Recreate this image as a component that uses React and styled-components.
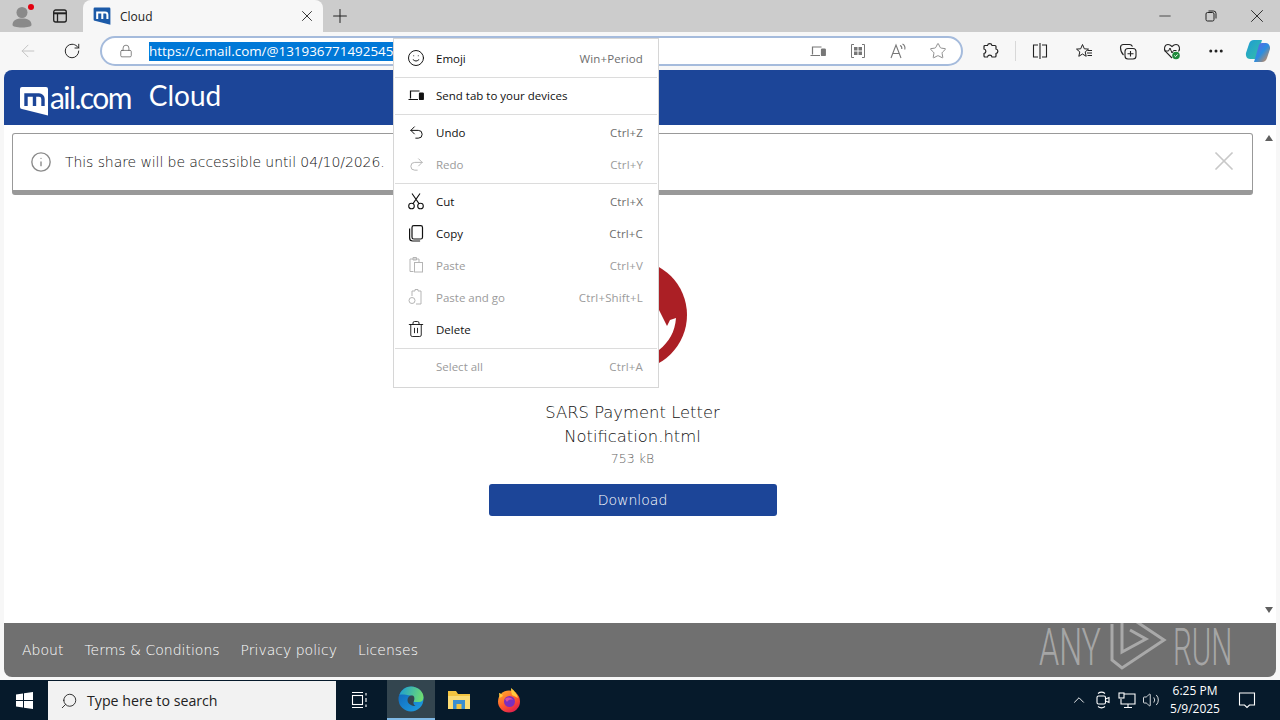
import React from "react";
import styled, { createGlobalStyle } from "styled-components";
import {
  ArrowLeft, RotateCw, Lock, Star, Plus, X, Minus, Ellipsis,
  Smile, Undo2, Redo2, Trash2, Search, ChevronUp, Volume2, Info,
} from "lucide-react";

const GlobalStyle = createGlobalStyle`
  html, body { margin: 0; height: 100%; overflow: hidden; background: #f7f7f7; }
  body { font-family: "Open Sans", "Noto Sans", sans-serif; }
  #root { height: 100%; }
`;

const Screen = styled.div`
  width: 1280px;
  height: 720px;
  display: flex;
  flex-direction: column;
  position: relative;
  overflow: hidden;
`;

/* browser chrome */
const TabStrip = styled.div`
  height: 32px;
  background: #cccccc;
  display: flex;
  align-items: center;
  flex-shrink: 0;
`;

const StripSlot = styled.div`
  width: ${(p) => p.$w || 40}px;
  height: 32px;
  display: flex;
  align-items: center;
  justify-content: center;
  position: relative;
  color: #222;
  flex-shrink: 0;
`;

const RedDot = styled.span`
  position: absolute;
  top: 4px;
  left: 28px;
  width: 6px;
  height: 6px;
  border-radius: 50%;
  background: #e3000f;
`;

const Tab = styled.div`
  width: 240px;
  height: 32px;
  margin-left: 7px;
  background: #f7f7f7;
  border-radius: 8px 8px 0 0;
  display: flex;
  align-items: center;
  padding: 0 7px 0 10px;
  box-sizing: border-box;
  flex-shrink: 0;
`;

const TabTitle = styled.span`
  font-size: 12px;
  color: #222;
  margin-left: 9px;
  flex: 1;
`;

const WindowButtons = styled.div`
  margin-left: auto;
  display: flex;
`;

const Toolbar = styled.div`
  height: 38px;
  background: #f7f7f7;
  display: flex;
  align-items: center;
  padding-left: 6px;
  flex-shrink: 0;
`;

const ToolSlot = styled.div`
  width: ${(p) => p.$w || 44}px;
  height: 32px;
  display: flex;
  align-items: center;
  justify-content: center;
  color: ${(p) => p.$color || "#222"};
  flex-shrink: 0;
`;

const AddressBar = styled.div`
  width: 863px;
  height: 30px;
  margin: 0 6px;
  box-sizing: border-box;
  background: #fff;
  border: 2px solid #a5bbdc;
  border-radius: 15px;
  display: flex;
  align-items: center;
  padding: 0 3px 0 6px;
  flex-shrink: 0;
`;

const LockSlot = styled.div`
  width: 36px;
  display: flex;
  justify-content: center;
  color: #555;
`;

const Selected = styled.span`
  margin-left: 5px;
  background: #0078d7;
  color: #fff;
  font-size: 13.4px;
  line-height: 19px;
  white-space: nowrap;
`;

const AddressIcons = styled.div`
  margin-left: auto;
  display: flex;
`;

const ToolDivider = styled.div`
  width: 1px;
  height: 20px;
  margin: 0 2px;
  background: #d8d8d8;
`;

/* web page */
const Page = styled.div`
  flex: 1;
  display: flex;
  flex-direction: column;
  padding: 0 4px 3px;
  min-height: 0;
`;

const Header = styled.header`
  height: 55px;
  background: #1c4598;
  border-radius: 8px 8px 0 0;
  display: flex;
  align-items: center;
  padding: 0 15px;
  color: #fff;
  flex-shrink: 0;
`;

const Logo = styled.div`
  display: flex;
  align-items: center;
  margin-top: 6px;
`;

const LogoText = styled.span`
  font-family: "Lato", sans-serif;
  font-weight: 400;
  font-size: 30px;
  letter-spacing: -1.6px;
  margin-left: 1px;
  margin-top: -8px;
  line-height: 1;
`;

const HeaderTitle = styled.span`
  font-family: "Lato", sans-serif;
  font-weight: 400;
  font-size: 28px;
  margin-left: 18px;
  line-height: 1;
  margin-top: -5px;
`;

const Main = styled.main`
  flex: 1;
  display: flex;
  background: #fff;
  min-height: 0;
`;

const Content = styled.div`
  flex: 1;
  padding: 8px;
  display: flex;
  flex-direction: column;
  align-items: center;
  font-family: "DejaVu Sans", sans-serif;
  font-weight: 200;
`;

const Notice = styled.div`
  align-self: stretch;
  height: 62px;
  box-sizing: border-box;
  border: 1px solid #999;
  border-bottom-width: 5px;
  border-radius: 3px;
  display: flex;
  align-items: center;
  padding: 0 18px 0 17px;
  color: #111;
`;

const NoticeText = styled.span`
  font-size: 14px;
  margin-left: 13px;
  letter-spacing: -0.08px;
`;

const NoticeClose = styled.div`
  margin-left: auto;
  color: #c8c8c8;
  display: flex;
  margin-top: -3px;
  margin-right: -6px;
`;

const FileIcon = styled.svg`
  width: 110px;
  height: 110px;
  margin: 65px 0 0 -1px;
  flex-shrink: 0;
`;

const FileName = styled.div`
  margin-top: 31px;
  font-size: 16.4px;
  line-height: 24px;
  text-align: center;
  color: #111;
  width: 220px;
`;

const FileSize = styled.div`
  font-size: 12.5px;
  line-height: 20px;
  color: #666;
`;

const DownloadButton = styled.button`
  width: 288px;
  height: 32px;
  margin-top: 15px;
  background: #1c4598;
  border: none;
  border-radius: 3px;
  color: #fff;
  font-family: inherit;
  font-weight: inherit;
  font-size: 14px;
`;

const Scrollbar = styled.div`
  width: 15px;
  display: flex;
  flex-direction: column;
  align-items: center;
  justify-content: space-between;
  padding: 10px 0 10px;
  box-sizing: border-box;
`;

const ScrollArrow = styled.span`
  width: 0;
  height: 0;
  border-left: 4px solid transparent;
  border-right: 4px solid transparent;
  ${(p) => (p.$down ? "border-top: 6px solid #606060;" : "border-bottom: 6px solid #606060;")}
`;

const Footer = styled.footer`
  height: 54px;
  background: #707070;
  border-radius: 0 0 8px 8px;
  display: flex;
  align-items: center;
  gap: 21px;
  padding: 0 18px;
  flex-shrink: 0;
`;

const FooterLink = styled.a`
  font-family: "DejaVu Sans", sans-serif;
  font-weight: 200;
  font-size: 14px;
  color: #fff;
`;

const Watermark = styled.div`
  position: absolute;
  left: 1039px;
  top: 610px;
  height: 62px;
  display: flex;
  align-items: center;
  color: rgba(255, 255, 255, 0.4);
  pointer-events: none;
`;

const WatermarkWord = styled.span`
  font-family: "Roboto", sans-serif;
  font-weight: 300;
  font-size: 52px;
  line-height: 1;
  display: inline-block;
  width: ${(p) => p.$w}px;
  margin-left: ${(p) => p.$ml || 0}px;
  transform: scaleX(${(p) => p.$scale});
  transform-origin: left center;
  margin-top: 14px;
`;

/* context menu */
const Menu = styled.div`
  position: absolute;
  left: 393px;
  top: 38px;
  width: 266px;
  box-sizing: border-box;
  background: #fff;
  border: 1px solid #d6d6d6;
  padding: 3px 0 5px;
`;

const MenuItem = styled.div`
  height: 32px;
  display: flex;
  align-items: center;
  padding: 0 15px 0 13px;
  font-size: 11.5px;
  color: ${(p) => (p.$disabled ? "#9b9b9b" : "#111")};
`;

const MenuIcon = styled.span`
  width: 18px;
  height: 18px;
  display: flex;
  align-items: center;
  justify-content: center;
  margin-right: 11px;
  color: ${(p) => (p.$disabled ? "#b5b5b5" : "#111")};
`;

const Shortcut = styled.span`
  margin-left: auto;
  letter-spacing: 0.15px;
  color: ${(p) => (p.$disabled ? "#9b9b9b" : "#6e6e6e")};
`;

const MenuDivider = styled.div`
  height: 1px;
  background: #dcdcdc;
  margin: 3px 1px 1px;
`;

/* taskbar */
const Taskbar = styled.div`
  height: 40px;
  background: #061a2b;
  display: flex;
  align-items: stretch;
  flex-shrink: 0;
`;

const StartButton = styled.div`
  width: 48px;
  display: flex;
  align-items: center;
  justify-content: center;
`;

const SearchBox = styled.div`
  width: 288px;
  box-sizing: border-box;
  background: #f2f2f2;
  display: flex;
  align-items: center;
  padding-left: 12px;
  font-size: 14.2px;
  color: #222;
  gap: 9px;
  margin-top: 1px;
`;

const TaskApps = styled.div`
  display: flex;
`;

const TaskSlot = styled.div`
  width: 48px;
  margin-left: ${(p) => p.$ml || 0}px;
  display: flex;
  align-items: center;
  justify-content: center;
  box-sizing: border-box;
  ${(p) => p.$active && "background: #33454f; border-bottom: 2px solid #7fb9e6;"}
`;

const Tray = styled.div`
  margin-left: auto;
  display: flex;
  align-items: center;
  color: #fff;
`;

const TraySlot = styled.div`
  width: 24px;
  display: flex;
  justify-content: center;
`;

const Clock = styled.div`
  width: 64px;
  text-align: center;
  font-size: 12px;
  line-height: 18px;
  color: #fff;
`;

const NotifySlot = styled.div`
  width: 40px;
  margin-right: 13px;
  display: flex;
  justify-content: center;
`;

function DevicesIcon({ size = 16 }) {
  return (
    <svg width={size} height={size} viewBox="0 0 16 16" fill="none" stroke="currentColor" strokeWidth="1.2">
      <path d="M2.5 11.5V4h9M0.5 12.5h9.5" />
      <rect x="11.5" y="6" width="3.8" height="6.5" rx="0.6" fill="currentColor" />
    </svg>
  );
}

function CutIcon() {
  return (
    <svg width="18" height="18" viewBox="0 0 18 18" fill="none" stroke="currentColor" strokeWidth="1.1">
      <circle cx="4.5" cy="14" r="2.8" />
      <circle cx="13.5" cy="14" r="2.8" />
      <path d="M6 11.6 13 1.5M12 11.6 5 1.5" />
    </svg>
  );
}

function CopyIcon() {
  return (
    <svg width="18" height="18" viewBox="0 0 18 18" fill="none" stroke="currentColor" strokeWidth="1.2">
      <rect x="5" y="1.6" width="10.5" height="13.4" rx="1.8" />
      <path d="M2.6 4.5V14a3 3 0 0 0 3 3h7.5" />
    </svg>
  );
}

function PasteIcon() {
  return (
    <svg width="18" height="18" viewBox="0 0 18 18" fill="none" stroke="currentColor" strokeWidth="1">
      <path d="M6.5 15.5H3V3h9v3M6 1.5h3.5V4H6z" />
      <rect x="7.5" y="6.5" width="8" height="9.5" />
    </svg>
  );
}

function PasteGoIcon() {
  return (
    <svg width="18" height="18" viewBox="0 0 18 18" fill="none" stroke="currentColor" strokeWidth="1">
      <path d="M5 8V3h3V1.5h3V3h3v13H9" />
      <circle cx="5" cy="12.5" r="3" />
    </svg>
  );
}

const menuGroups = [
  [{ label: "Emoji", keys: "Win+Period", icon: <Smile size={18} strokeWidth={1.3} /> }],
  [{ label: "Send tab to your devices", icon: <DevicesIcon size={16} /> }],
  [
    { label: "Undo", keys: "Ctrl+Z", icon: <Undo2 size={17} strokeWidth={1.4} /> },
    { label: "Redo", keys: "Ctrl+Y", disabled: true, icon: <Redo2 size={17} strokeWidth={1.4} /> },
  ],
  [
    { label: "Cut", keys: "Ctrl+X", icon: <CutIcon /> },
    { label: "Copy", keys: "Ctrl+C", icon: <CopyIcon /> },
    { label: "Paste", keys: "Ctrl+V", disabled: true, icon: <PasteIcon /> },
    { label: "Paste and go", keys: "Ctrl+Shift+L", disabled: true, icon: <PasteGoIcon /> },
    { label: "Delete", icon: <Trash2 size={20} strokeWidth={1.2} /> },
  ],
  [{ label: "Select all", keys: "Ctrl+A", disabled: true }],
];

function MailMark({ size, bg, fg }) {
  return (
    <svg width={size} height={size} viewBox="0 0 30 30">
      <path d="M3 1h24a2 2 0 0 1 2 2v26.5L3 23a2 2 0 0 1-2-2V3a2 2 0 0 1 2-2z" fill={bg} />
      <path d="M7 20V9h13a4 4 0 0 1 4 4v7M15.5 9v11" fill="none" stroke={fg} strokeWidth="3.4" />
    </svg>
  );
}

function TabsIcon() {
  return (
    <svg width="16" height="16" viewBox="0 0 16 16" fill="none" stroke="currentColor" strokeWidth="1.3">
      <rect x="1.7" y="2" width="12.6" height="12" rx="2" />
      <path d="M1.7 5.3h12.6" strokeWidth="2" />
      <path d="M5.5 5v9" />
    </svg>
  );
}

function ProfileIcon() {
  return (
    <svg width="24" height="24" viewBox="0 0 24 24" fill="#8a8a8a">
      <circle cx="12" cy="8.5" r="5.5" />
      <path d="M2.5 21c0-5 4-6.5 9.5-6.5s9.5 1.5 9.5 6.5c0 1.5-4 2.5-9.5 2.5S2.5 22.5 2.5 21z" />
    </svg>
  );
}

function RestoreIcon() {
  return (
    <svg width="12" height="12" viewBox="0 0 12 12" fill="none" stroke="currentColor">
      <rect x="1" y="2.5" width="8" height="8.5" rx="1.5" />
      <path d="M3.5 1h5a2.500 2.500 0 0 1 2.5 2.5v5" />
    </svg>
  );
}

function AppsIcon() {
  return (
    <svg width="16" height="16" viewBox="0 0 16 16" fill="#777" stroke="#777">
      <path d="M4 1.5H1.5V14.5H4M12 1.5h2.5v13H12" fill="none" />
      <rect x="4" y="4" width="3.5" height="3.5" strokeWidth="0" />
      <rect x="8.5" y="4" width="3.5" height="3.5" strokeWidth="0" />
      <rect x="4" y="8.5" width="3.5" height="3.5" strokeWidth="0" />
      <rect x="8.5" y="8.5" width="3.5" height="3.5" strokeWidth="0" />
    </svg>
  );
}

function ReadAloudIcon() {
  return (
    <svg width="18" height="18" viewBox="0 0 18 18" fill="none" stroke="#777" strokeWidth="1.1">
      <path d="M2 16 7 3l5 13M3.8 11.5h6.4" />
      <path d="M11 3.5c1.5.5 2 2 1.8 3.5M13.5 2c2 1 2.8 3 2.3 5.5" />
    </svg>
  );
}

function ExtensionsIcon() {
  return (
    <svg width="18" height="18" viewBox="0 0 18 18" fill="none" stroke="#222" strokeWidth="1.2">
      <path d="M5.5 3.5C6 1 9.5 1 10 3.5h3a1 1 0 0 1 1 1V7c2.5.5 2.5 4 0 4.5V14a1 1 0 0 1-1 1h-3C9.500 12.500 6 12.500 5.500 15H3a1 1 0 0 1-1-1v-2.500C4.500 11 4.500 7.500 2 7V4.500a1 1 0 0 1 1-1z" />
    </svg>
  );
}

function SplitIcon() {
  return (
    <svg width="18" height="18" viewBox="0 0 18 18" fill="none" stroke="#222" strokeWidth="1.1">
      <path d="M9 1v16M7 3H2.5v12H7M11 3h4.5v12H11" />
    </svg>
  );
}

function FavoritesIcon() {
  return (
    <svg width="18" height="18" viewBox="0 0 18 18" fill="none" stroke="#222" strokeWidth="1">
      <path d="M7.5 2.5 9.300 6.800l4.200.3-3.300 2.800 1 4.400-3.700-2.300-3.700 2.300 1-4.400L1.500 7.100l4.200-.3z" />
      <path d="M12.5 8.5h4.500M12 11h5M12.500 13.500h4.500" />
    </svg>
  );
}

function CollectionsIcon() {
  return (
    <svg width="18" height="18" viewBox="0 0 18 18" fill="none" stroke="#222" strokeWidth="1.1">
      <path d="M4.5 13C2.5 11 1.5 8 1.5 5.5c0-2 1.5-3 3-3h6c1.5 0 2.5 1 3 2" />
      <rect x="6" y="6.5" width="11" height="10.5" rx="3" />
      <path d="M11.5 9v5.5M8.5 11.7h6" />
    </svg>
  );
}

function HealthIcon() {
  return (
    <svg width="18" height="18" viewBox="0 0 18 18" fill="none">
      <path d="M9 16 2.5 9.5C.5 7 1.5 2.5 5 2.5c2 0 3 1 4 2 1-1 2-2 4-2 3.5 0 4.5 4.5 2.5 7" stroke="#222" strokeWidth="1.1" />
      <path d="M1.5 9h4l1.5-3 2 5 1.500-2.500h3" stroke="#222" strokeWidth="1" />
      <circle cx="13" cy="13.5" r="3.8" fill="#1f8a3c" />
      <path d="m11.3 13.5 1.200 1.200 2.200-2.300" stroke="#fff" strokeWidth="1" />
    </svg>
  );
}

function CopilotIcon() {
  return (
    <svg width="26" height="24" viewBox="0 0 26 24">
      <defs>
        <linearGradient id="copA" x1="0" y1="0" x2="1" y2="1">
          <stop offset="0" stopColor="#1e9ad6" />
          <stop offset="1" stopColor="#35c1a5" />
        </linearGradient>
        <linearGradient id="copB" x1="0" y1="0" x2="1" y2="1">
          <stop offset="0" stopColor="#6b5be6" />
          <stop offset="0.5" stopColor="#2a8de0" />
          <stop offset="1" stopColor="#f28a3c" />
        </linearGradient>
      </defs>
      <path d="M9 1h8l-5 17c-.5 1.5-1.5 2-3 2H5C2 20 .5 17 1 14L4 5c.8-2.500 2.500-4 5-4z" fill="url(#copA)" />
      <path d="M17 4h4c2.500 0 4.500 3 4 6l-3 9c-.8 2.500-2.500 4-5 4H9l5-17c.4-1.300 1.500-2 3-2z" fill="url(#copB)" />
    </svg>
  );
}

function WindowsIcon() {
  return (
    <svg width="17" height="17" viewBox="0 0 17 17" fill="#fff">
      <path d="M0 2.4 7 1.4V8H0zM8 1.3 17 0v8H8zM0 9h7v6.600l-7-1zM8 9h9v8l-9-1.300z" />
    </svg>
  );
}

function TaskViewIcon() {
  return (
    <svg width="18" height="18" viewBox="0 0 18 18" fill="none" stroke="#fff" strokeWidth="1.1">
      <rect x="1.5" y="4.5" width="10" height="9" />
      <path d="M1 1.5h11M1 16.5h11M15 2v2.500M15 7v4M15 13.500V16" />
    </svg>
  );
}

function EdgeIcon() {
  return (
    <svg width="26" height="26" viewBox="0 0 26 26">
      <defs>
        <linearGradient id="edgeA" x1="0" y1="0.3" x2="1" y2="0.5">
          <stop offset="0" stopColor="#1f9fd0" />
          <stop offset="1" stopColor="#6fdc70" />
        </linearGradient>
        <linearGradient id="edgeB" x1="0" y1="0" x2="0.8" y2="1">
          <stop offset="0" stopColor="#0f5fb5" />
          <stop offset="1" stopColor="#1d9be0" />
        </linearGradient>
      </defs>
      <circle cx="13" cy="13" r="12.5" fill="url(#edgeB)" />
      <path d="M1.5 9C3.500 3.500 8 .5 13 .5c7 0 12.500 5 12.500 11 0 3-2 4.500-4.500 4.500h-5.500c1.500-3 .5-6-3-6.500C8 9 4 8 1.500 9z" fill="url(#edgeA)" />
      <path d="M9.5 14c0-3 2.500-5 5-4.500 2 .5 2.500 3.500 1 6.500-.5 1.500.5 3 2 4-3.500 0-8-2-8-6z" fill="#33454f" />
    </svg>
  );
}

function FolderIcon() {
  return (
    <svg width="24" height="22" viewBox="0 0 24 22">
      <path d="M1 2h8l2 3h12v15H1z" fill="#f3c440" />
      <path d="M1 7h22v13H1z" fill="#fbdc75" />
      <rect x="6" y="11" width="12" height="9" fill="#3a8ed0" />
      <rect x="9.5" y="15" width="5" height="5" fill="#f3c440" />
    </svg>
  );
}

function FirefoxIcon() {
  return (
    <svg width="24" height="26" viewBox="0 0 24 26">
      <defs>
        <linearGradient id="foxA" x1="0" y1="0" x2="0.6" y2="1">
          <stop offset="0" stopColor="#ffb52e" />
          <stop offset="0.6" stopColor="#ff5a2c" />
          <stop offset="1" stopColor="#e3224d" />
        </linearGradient>
      </defs>
      <circle cx="12" cy="14.5" r="11" fill="url(#foxA)" />
      <path d="M14 1c4 3 6 6 7 10l-6-3c-.5-2-1-4-1-7zM2 6c1 0 3 1 4 3L2.5 11z" fill="#ffc93c" />
      <circle cx="12.5" cy="14.5" r="5.5" fill="#7b2fbe" />
      <path d="M8 12c3-2.500 7-1.500 8 1-2-.8-5-.5-6 2z" fill="#d94fa0" />
    </svg>
  );
}

function MeetIcon() {
  return (
    <svg width="18" height="18" viewBox="0 0 18 18" fill="none" stroke="#fff" strokeWidth="1.1">
      <path d="M4 2.5C6 1 9 1 11 2.5M4 15.5c2 1.5 5 1.5 7 0" />
      <rect x="3" y="5" width="8.5" height="8" rx="1.5" />
      <path d="m11.5 8 3.500-1.500v5L11.500 10z" />
    </svg>
  );
}

function NetworkIcon() {
  return (
    <svg width="18" height="18" viewBox="0 0 18 18" fill="none" stroke="#fff" strokeWidth="1.1">
      <path d="M5 3h12v10H3V8M10 13v3M6 16.5h8" />
      <rect x="1" y="2" width="5" height="5" fill="#061a2b" />
    </svg>
  );
}

function NotifyIcon() {
  return (
    <svg width="18" height="18" viewBox="0 0 18 18" fill="none" stroke="#fff" strokeWidth="1.1">
      <path d="M1.5 2h15v12h-5L9 16.5 6.5 14h-5z" />
    </svg>
  );
}

function AnyRunIcon() {
  return (
    <svg width="62" height="62" viewBox="0 0 62 62" fill="none" stroke="currentColor" strokeWidth="3">
      <path d="M4 14v36l10 8 42-28L14 2v40l24-13-16-9" />
    </svg>
  );
}

const App = () => (
  <Screen>
    <GlobalStyle />
    <TabStrip>
      <StripSlot $w={44}><ProfileIcon /><RedDot /></StripSlot>
      <StripSlot $w={32}><TabsIcon /></StripSlot>
      <Tab>
        <MailMark size={18} bg="#1c5aa8" fg="#fff" />
        <TabTitle>Cloud</TabTitle>
        <X size={18} strokeWidth={1.2} color="#222" />
      </Tab>
      <StripSlot $w={34}><Plus size={22} strokeWidth={1.1} /></StripSlot>
      <WindowButtons>
        <StripSlot $w={46}><Minus size={18} strokeWidth={1} /></StripSlot>
        <StripSlot $w={46}><RestoreIcon /></StripSlot>
        <StripSlot $w={46}><X size={22} strokeWidth={1} /></StripSlot>
      </WindowButtons>
    </TabStrip>

    <Toolbar>
      <ToolSlot $color="#c4c4c4"><ArrowLeft size={20} strokeWidth={1.2} /></ToolSlot>
      <ToolSlot><RotateCw size={18} strokeWidth={1.3} /></ToolSlot>
      <AddressBar>
        <LockSlot><Lock size={14} strokeWidth={1.2} /></LockSlot>
        <Selected>https://c.mail.com/@131936771492545</Selected>
        <AddressIcons>
          <ToolSlot $w={40} $color="#777"><DevicesIcon size={16} /></ToolSlot>
          <ToolSlot $w={40}><AppsIcon /></ToolSlot>
          <ToolSlot $w={40}><ReadAloudIcon /></ToolSlot>
          <ToolSlot $w={40} $color="#777"><Star size={18} strokeWidth={1.1} /></ToolSlot>
        </AddressIcons>
      </AddressBar>
      <ToolSlot><ExtensionsIcon /></ToolSlot>
      <ToolDivider />
      <ToolSlot><SplitIcon /></ToolSlot>
      <ToolSlot><FavoritesIcon /></ToolSlot>
      <ToolSlot><CollectionsIcon /></ToolSlot>
      <ToolSlot><HealthIcon /></ToolSlot>
      <ToolSlot><Ellipsis size={18} strokeWidth={2} /></ToolSlot>
      <ToolSlot $w={40}><CopilotIcon /></ToolSlot>
    </Toolbar>

    <Page>
      <Header>
        <Logo>
          <MailMark size={30} bg="#fff" fg="#1c4598" />
          <LogoText>ail.com</LogoText>
        </Logo>
        <HeaderTitle>Cloud</HeaderTitle>
      </Header>
      <Main>
        <Content>
          <Notice>
            <Info size={22} strokeWidth={1.5} color="#8a8a8a" />
            <NoticeText>This share will be accessible until 04/10/2026.</NoticeText>
            <NoticeClose><X size={32} strokeWidth={1.3} /></NoticeClose>
          </Notice>
          <FileIcon viewBox="0 0 110 110">
            <circle cx="55" cy="55" r="55" fill="#ab1f25" />
            <path d="M82 50 90 66l3-6 6-2c-1 14-7 24-17 32H40V50z" fill="#fff" />
          </FileIcon>
          <FileName>SARS Payment Letter Notification.html</FileName>
          <FileSize>753 kB</FileSize>
          <DownloadButton>Download</DownloadButton>
        </Content>
        <Scrollbar>
          <ScrollArrow />
          <ScrollArrow $down />
        </Scrollbar>
      </Main>
      <Footer>
        <FooterLink>About</FooterLink>
        <FooterLink>Terms &amp; Conditions</FooterLink>
        <FooterLink>Privacy policy</FooterLink>
        <FooterLink>Licenses</FooterLink>
      </Footer>
    </Page>

    <Taskbar>
      <StartButton><WindowsIcon /></StartButton>
      <SearchBox>
        <Search size={18} strokeWidth={1.2} style={{ transform: "scaleX(-1)" }} />
        Type here to search
      </SearchBox>
      <TaskApps>
        <TaskSlot><TaskViewIcon /></TaskSlot>
        <TaskSlot $active $ml={3}><EdgeIcon /></TaskSlot>
        <TaskSlot><FolderIcon /></TaskSlot>
        <TaskSlot $ml={2}><FirefoxIcon /></TaskSlot>
      </TaskApps>
      <Tray>
        <TraySlot><ChevronUp size={18} strokeWidth={1.2} /></TraySlot>
        <TraySlot><MeetIcon /></TraySlot>
        <TraySlot><NetworkIcon /></TraySlot>
        <TraySlot><Volume2 size={18} strokeWidth={1.1} /></TraySlot>
        <Clock>6:25 PM<br />5/9/2025</Clock>
        <NotifySlot><NotifyIcon /></NotifySlot>
      </Tray>
    </Taskbar>

    <Menu>
      {menuGroups.map((group, i) => (
        <React.Fragment key={i}>
          {i > 0 && <MenuDivider />}
          {group.map((item) => (
            <MenuItem key={item.label} $disabled={item.disabled}>
              <MenuIcon $disabled={item.disabled}>{item.icon}</MenuIcon>
              {item.label}
              {item.keys && <Shortcut $disabled={item.disabled}>{item.keys}</Shortcut>}
            </MenuItem>
          ))}
        </React.Fragment>
      ))}
    </Menu>

    <Watermark>
      <WatermarkWord $w={69} $scale={0.62}>ANY</WatermarkWord>
      <AnyRunIcon />
      <WatermarkWord $w={56} $ml={3} $scale={0.57}>RUN</WatermarkWord>
    </Watermark>
  </Screen>
);

export default App;
